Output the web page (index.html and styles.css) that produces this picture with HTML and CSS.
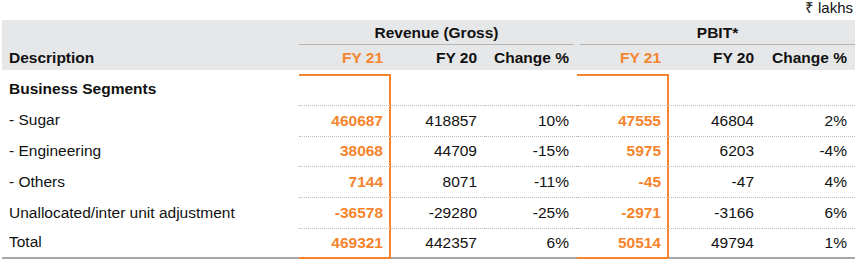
FILE: index.html
```html
<!DOCTYPE html>
<html>
<head>
<meta charset="utf-8">
<link rel="stylesheet" href="styles.css">
</head>
<body>
<div class="report">
  <div class="unit">₹ lakhs</div>
  <div class="head">
    <div class="hcell"></div>
    <div class="group group-rev"><div class="group-label">Revenue (Gross)</div></div>
    <div class="group group-pbit"><div class="group-label">PBIT*</div></div>
    <div class="hcell desc">Description</div>
    <div class="hcell num hi">FY 21</div>
    <div class="hcell num">FY 20</div>
    <div class="hcell num">Change %</div>
    <div class="hcell num hi">FY 21</div>
    <div class="hcell num">FY 20</div>
    <div class="hcell num">Change %</div>
  </div>
  <div class="grid body">
    <div class="cell desc strong first">Business Segments</div>
    <div class="cell num hi first"></div>
    <div class="cell num first"></div>
    <div class="cell num first"></div>
    <div class="cell num hi first"></div>
    <div class="cell num first"></div>
    <div class="cell num first"></div>

    <div class="cell desc">- Sugar</div>
    <div class="cell num hi">460687</div>
    <div class="cell num">418857</div>
    <div class="cell num">10%</div>
    <div class="cell num hi">47555</div>
    <div class="cell num">46804</div>
    <div class="cell num">2%</div>

    <div class="cell desc">- Engineering</div>
    <div class="cell num hi">38068</div>
    <div class="cell num">44709</div>
    <div class="cell num">-15%</div>
    <div class="cell num hi">5975</div>
    <div class="cell num">6203</div>
    <div class="cell num">-4%</div>

    <div class="cell desc">- Others</div>
    <div class="cell num hi">7144</div>
    <div class="cell num">8071</div>
    <div class="cell num">-11%</div>
    <div class="cell num hi">-45</div>
    <div class="cell num">-47</div>
    <div class="cell num">4%</div>

    <div class="cell desc">Unallocated/inter unit adjustment</div>
    <div class="cell num hi">-36578</div>
    <div class="cell num">-29280</div>
    <div class="cell num">-25%</div>
    <div class="cell num hi">-2971</div>
    <div class="cell num">-3166</div>
    <div class="cell num">6%</div>

    <div class="cell desc last">Total</div>
    <div class="cell num hi last">469321</div>
    <div class="cell num last">442357</div>
    <div class="cell num last">6%</div>
    <div class="cell num hi last">50514</div>
    <div class="cell num last">49794</div>
    <div class="cell num last">1%</div>
  </div>
</div>
</body>
</html>
```

FILE: styles.css
```css
html, body {
  margin: 0;
  padding: 0;
  background: #ffffff;
}

body {
  font-family: "Liberation Sans", Arial, Helvetica, sans-serif;
  font-size: 15.5px;
  color: #111111;
}

.report {
  width: 853px;
  margin: 0 2px;
}

.unit {
  height: 20px;
  box-sizing: border-box;
  line-height: 16px;
  padding-bottom: 4px;
  padding-right: 2px;
  text-align: right;
  font-size: 15px;
}

.head,
.grid {
  display: grid;
  grid-template-columns: 297px 92px 94px 92px 92px 93px 93px;
}

.head {
  background: #e6e7e8;
  grid-template-rows: 25px 25px;
  font-weight: bold;
}

.hcell {
  display: flex;
  align-items: center;
  box-sizing: border-box;
  padding: 0 8px 0 7px;
}

.group {
  grid-column: span 3;
  box-sizing: border-box;
}

.group-rev {
  padding-right: 3px;
}

.group-pbit {
  padding-left: 3px;
}

.group-label {
  height: 100%;
  box-sizing: border-box;
  border-bottom: 1px solid #b4b4b4;
  display: flex;
  align-items: center;
  justify-content: center;
  padding-top: 1px;
}

.num {
  justify-content: flex-end;
}

.hi {
  color: #f5842c;
}

.body {
  margin-top: 4px;
  grid-auto-rows: 30.8px;
}

.cell {
  display: flex;
  align-items: center;
  box-sizing: border-box;
  padding: 0 8px 0 7px;
  border-top: 1px dotted #bdbdbd;
}

.cell.desc {
  border-top: none;
}

.cell.first {
  border-top: none;
}

.cell.hi {
  font-weight: bold;
  border-right: 2px solid #f5842c;
  padding-right: 6px;
}

.cell.hi.first {
  border-top: 2px solid #f5842c;
}

.cell.last {
  border-bottom: 2px solid #a8a8a8;
}

.cell.hi.last {
  border-bottom-color: #f5842c;
}

.strong {
  font-weight: bold;
}
```
